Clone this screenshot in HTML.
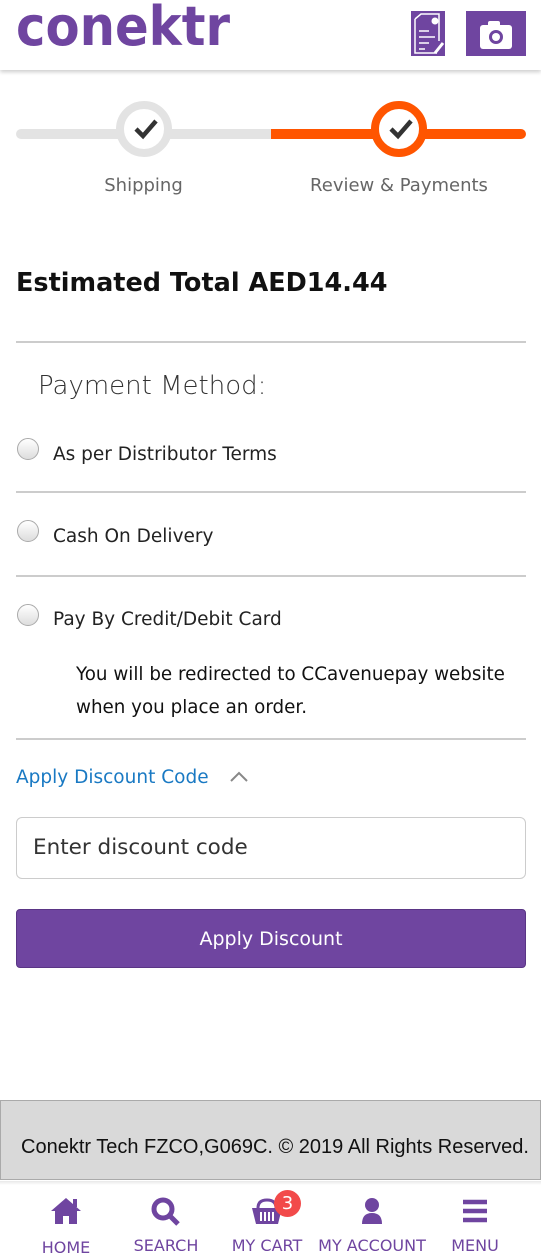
<!DOCTYPE html>
<html><head><meta charset="utf-8"><style>
*{margin:0;padding:0;box-sizing:border-box}
body{width:541px;height:1260px;background:#fff;font-family:"DejaVu Sans","Liberation Sans",sans-serif;color:#222;position:relative;overflow:hidden}
.abs{position:absolute}
.hr{position:absolute;left:16px;width:510px;height:2px;background:#ccc}
.radio{position:absolute;left:17px;width:22px;height:22px;border-radius:50%;border:1px solid #aaa;background:linear-gradient(#fff,#ddd)}
.lbl{position:absolute;left:53px;font-size:18.5px;color:#222;line-height:24px}
.nav{position:absolute;top:1190px;width:108px;text-align:center;color:#6f45a0;font-size:16px}
.nav svg{display:block;margin:6px auto 0}
.nav span{display:block;margin-top:10px}
</style></head><body>
<div class="abs" style="left:0;top:0;width:541px;height:70px;box-shadow:0 2px 4px rgba(0,0,0,.2)"></div>
<svg class="abs" style="left:0;top:0" width="260" height="60"><text x="16" y="45" font-family="DejaVu Sans" font-weight="bold" font-size="54" fill="#6f45a0" textLength="214" lengthAdjust="spacingAndGlyphs">conektr</text></svg>
<svg class="abs" style="left:411px;top:11px" width="34" height="45" viewBox="0 0 34 45"><rect width="34" height="45" fill="#6f45a0"/><path d="M4 8 L10 3 H28 V30 M4 8 V42 H26" stroke="#fff" stroke-width="1.5" fill="none"/><circle cx="24" cy="10" r="3.5" fill="#fff"/><path d="M8 20h10M8 26h16M8 32h10M8 38h6" stroke="#fff" stroke-width="1.5"/><path d="M24 42 L32 32" stroke="#fff" stroke-width="3"/></svg>
<svg class="abs" style="left:466px;top:11px" width="60" height="45" viewBox="0 0 60 45"><rect width="60" height="45" fill="#6f45a0"/><rect x="14" y="14" width="32" height="24" rx="3" fill="#fff"/><rect x="22" y="10" width="12" height="6" rx="2" fill="#fff"/><circle cx="30" cy="26" r="7" fill="#6f45a0"/><circle cx="30" cy="26" r="4" fill="#fff"/></svg>

<div class="abs" style="left:16px;top:129px;width:260px;height:10px;background:#e3e3e3;border-radius:5px"></div>
<div class="abs" style="left:271px;top:129px;width:255px;height:10px;background:#ff5500;border-radius:0 5px 5px 0"></div>
<div class="abs" style="left:116px;top:101px;width:56px;height:56px;border-radius:50%;background:#fff;border:8px solid #e3e3e3"></div>
<div class="abs" style="left:371px;top:101px;width:56px;height:56px;border-radius:50%;background:#fff;border:8px solid #ff5500"></div>
<svg class="abs" style="left:134px;top:117px" width="24" height="24" viewBox="0 0 24 24"><path d="M2 12 L9 19 L22 4" stroke="#333" stroke-width="4.5" fill="none"/></svg>
<svg class="abs" style="left:389px;top:117px" width="24" height="24" viewBox="0 0 24 24"><path d="M2 12 L9 19 L22 4" stroke="#333" stroke-width="4.5" fill="none"/></svg>
<div class="abs" style="left:0;width:287px;top:175px;text-align:center;font-size:18px;color:#666">Shipping</div>
<div class="abs" style="left:256px;width:286px;top:175px;text-align:center;font-size:18px;color:#666">Review &amp; Payments</div>

<div class="abs" style="left:16px;top:268px;font-size:25.5px;font-weight:bold;color:#111">Estimated Total AED14.44</div>
<div class="hr" style="top:341px"></div>
<div class="abs" style="left:38px;top:371px;font-size:26px;color:#333;font-weight:300">Payment Method:</div>
<div class="radio" style="top:438px"></div><div class="lbl" style="top:443px">As per Distributor Terms</div>
<div class="hr" style="top:491px"></div>
<div class="radio" style="top:520px"></div><div class="lbl" style="top:525px">Cash On Delivery</div>
<div class="hr" style="top:575px"></div>
<div class="radio" style="top:604px"></div><div class="lbl" style="top:608px">Pay By Credit/Debit Card</div>
<div class="abs" style="left:76px;top:658px;font-size:18.3px;line-height:33px;color:#111">You will be redirected to CCavenuepay website<br>when you place an order.</div>
<div class="hr" style="top:738px"></div>
<div class="abs" style="left:16px;top:767px;font-size:18.5px;color:#1979c3">Apply Discount Code</div>
<svg class="abs" style="left:230px;top:771px" width="18" height="12" viewBox="0 0 18 12"><path d="M1 10 L9 2 L17 10" stroke="#888" stroke-width="2" fill="none"/></svg>
<div class="abs" style="left:16px;top:817px;width:510px;height:62px;border:1px solid #ccc;border-radius:6px"></div>
<div class="abs" style="left:33px;top:835px;font-size:21.5px;color:#333">Enter discount code</div>
<div class="abs" style="left:16px;top:909px;width:510px;height:59px;background:#6f45a0;border-radius:4px;border:1px solid #5a3585;color:#fff;font-size:19px;text-align:center;line-height:59px">Apply Discount</div>

<div class="abs" style="left:0;top:1100px;width:541px;height:80px;background:#d9d9d9;border:1px solid #aaa"></div>
<div class="abs" style="left:21px;top:1136px;font-family:'Liberation Sans',sans-serif;font-size:20px;color:#111">Conektr Tech FZCO,G069C. © 2019 All Rights Reserved.</div>
<div class="abs" style="left:0;top:1181px;width:541px;height:4px;background:linear-gradient(#e8e8e8,#fff)"></div>

<div class="nav" style="left:12px"><svg width="34" height="30" viewBox="0 0 34 30"><path d="M17 2 L2 15 H6 V28 H14 V20 H20 V28 H28 V15 H32 Z" fill="#6f45a0"/><rect x="24" y="3" width="4" height="8" fill="#6f45a0"/></svg><span style="margin-top:12px">HOME</span></div>
<div class="nav" style="left:112px"><svg width="32" height="30" viewBox="0 0 32 30"><circle cx="13" cy="13" r="9" stroke="#6f45a0" stroke-width="5" fill="none"/><path d="M20 20 L28 28" stroke="#6f45a0" stroke-width="5"/></svg><span>SEARCH</span></div>
<div class="nav" style="left:213px"><svg width="34" height="30" viewBox="0 0 34 30"><path d="M8 12 Q8 4 17 4 Q26 4 26 12" stroke="#6f45a0" stroke-width="3" fill="none"/><path d="M2 12 H32 L28 28 H6 Z" fill="#6f45a0"/><path d="M11 16v9M15 16v9M19 16v9M23 16v9" stroke="#fff" stroke-width="2"/></svg><span>MY CART</span></div>
<div class="abs" style="left:274px;top:1190px;width:27px;height:27px;border-radius:50%;background:#f24a4a;color:#fff;font-size:18px;text-align:center;line-height:27px">3</div>
<div class="nav" style="left:318px"><svg width="30" height="30" viewBox="0 0 30 30"><circle cx="15" cy="9" r="7" fill="#6f45a0"/><path d="M5 28 Q5 17 15 17 Q25 17 25 28 Z" fill="#6f45a0"/></svg><span>MY ACCOUNT</span></div>
<div class="nav" style="left:421px"><svg width="30" height="30" viewBox="0 0 30 30"><path d="M3 6h24M3 15h24M3 24h24" stroke="#6f45a0" stroke-width="4.5"/></svg><span>MENU</span></div>
</body></html>
